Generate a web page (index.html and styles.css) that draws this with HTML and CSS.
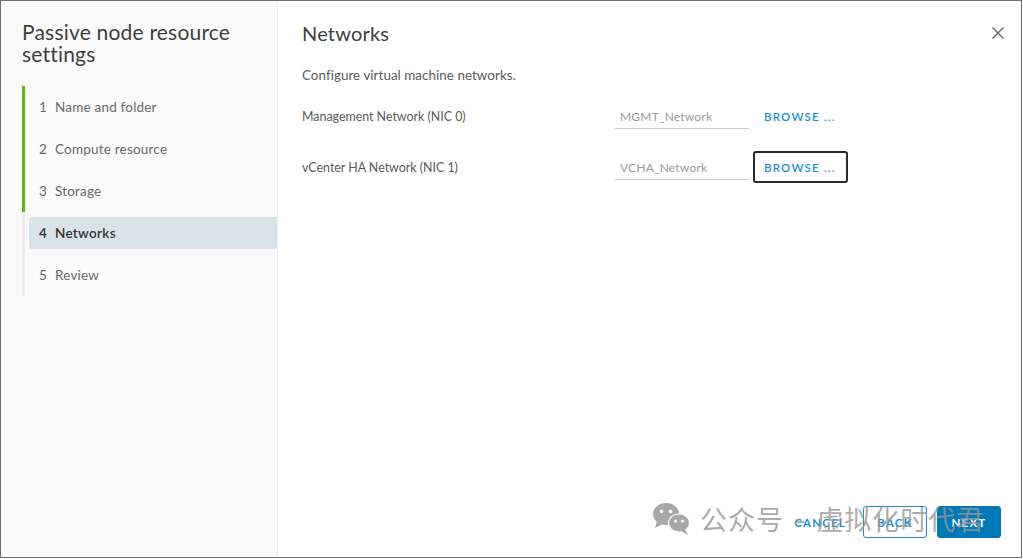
FILE: index.html
```html
<!DOCTYPE html>
<html>
<head>
<meta charset="utf-8">
<link rel="stylesheet" href="styles.css">
</head>
<body>
<div class="dialog">
  <aside class="sidebar">
    <h1 class="title">Passive node resource settings</h1>
    <ol class="steps">
      <li class="step done"><span class="step-inner"><span class="num">1</span>Name and folder</span></li>
      <li class="step done"><span class="step-inner"><span class="num">2</span>Compute resource</span></li>
      <li class="step done"><span class="step-inner"><span class="num">3</span>Storage</span></li>
      <li class="step active"><span class="step-inner"><span class="num">4</span>Networks</span></li>
      <li class="step"><span class="step-inner"><span class="num">5</span>Review</span></li>
    </ol>
  </aside>
  <main class="content">
    <header class="content-header">
      <h2 class="heading">Networks</h2>
      <button class="close" aria-label="Close">
        <svg width="14" height="14" viewBox="0 0 14 14"><path d="M1.5 1.5 L12.5 12.5 M12.5 1.5 L1.5 12.5" stroke="#6a6a6a" stroke-width="1.4" fill="none"/></svg>
      </button>
    </header>
    <p class="desc">Configure virtual machine networks.</p>
    <div class="rows">
      <div class="row">
        <span class="label">Management Network (NIC 0)</span>
        <span class="field">MGMT_Network</span>
        <button class="browse">BROWSE ...</button>
      </div>
      <div class="row">
        <span class="label">vCenter HA Network (NIC 1)</span>
        <span class="field">VCHA_Network</span>
        <button class="browse focused">BROWSE ...</button>
      </div>
    </div>
    <footer class="footer">
      <button class="btn btn-flat">CANCEL</button>
      <button class="btn btn-outline">BACK</button>
      <button class="btn btn-primary">NEXT</button>
    </footer>
  </main>
  <div class="watermark">
    <svg class="wm-icon" width="40" height="34" viewBox="0 0 40 34">
      <ellipse cx="14" cy="12" rx="13" ry="11" fill="#a8a8a8"/>
      <path d="M5 19 L3 26 L11 22 Z" fill="#a8a8a8"/>
      <circle cx="9.5" cy="9.5" r="1.8" fill="#fff"/>
      <circle cx="18.5" cy="9.5" r="1.8" fill="#fff"/>
      <ellipse cx="27" cy="21" rx="11" ry="9.5" fill="#fff"/>
      <ellipse cx="27" cy="21" rx="10" ry="8.5" fill="#a8a8a8"/>
      <path d="M33 27 L36 33 L29 29 Z" fill="#a8a8a8"/>
      <circle cx="23.5" cy="19" r="1.5" fill="#fff"/>
      <circle cx="30.5" cy="19" r="1.5" fill="#fff"/>
    </svg>
    <span class="wm-text">公众号<span class="wm-sep">-</span>虚拟化时代君</span>
  </div>
</div>
</body>
</html>
```

FILE: styles.css
```css
* { box-sizing: border-box; }
html, body { margin: 0; padding: 0; background: #fff; }
body { font-family: "Lato", "Open Sans", "Noto Sans", sans-serif; color: #565656; }

.dialog {
  position: relative;
  width: 1022px;
  height: 558px;
  border: 1px solid #707070;
  display: flex;
  background: #fff;
  overflow: hidden;
}

.sidebar {
  width: 277px;
  flex: none;
  background: #fafafa;
  border-right: 1px solid #ededed;
}

.title {
  margin: 0;
  padding: 20px 0 0 21px;
  font-size: 21px;
  font-weight: 400;
  line-height: 22px;
  color: #404040;
  letter-spacing: 0.2px;
}

.steps {
  list-style: none;
  margin: 21px 0 0 21px;
  padding: 0;
}

.step {
  border-left: 3px solid #eeeeee;
  padding: 5px 0 5px 4px;
  height: 42px;
}
.step.done { border-left-color: #62b516; }

.step-inner {
  display: flex;
  align-items: center;
  height: 32px;
  padding-left: 10px;
  font-size: 13.5px;
  letter-spacing: 0.2px;
  color: #6a6a6a;
  border-radius: 3px 0 0 3px;
}
.step .num { width: 16px; }
.step.active .step-inner {
  background: #d9e4ea;
  color: #333;
  font-weight: 600;
  letter-spacing: 0.3px;
}

.content {
  flex: 1;
  display: flex;
  flex-direction: column;
  padding: 20px 20px 19px 24px;
}

.content-header {
  display: flex;
  align-items: center;
  justify-content: space-between;
  height: 24px;
}
.heading {
  margin: 0;
  font-size: 20px;
  font-weight: 400;
  line-height: 24px;
  color: #404040;
  letter-spacing: 0.2px;
}
.close {
  border: 0;
  background: none;
  padding: 0;
  width: 14px;
  height: 14px;
  margin-right: -4px;
  display: flex;
}

.desc {
  margin: 21px 0 0;
  font-size: 13.4px;
  line-height: 18px;
  color: #5a5a5a;
  letter-spacing: 0.05px;
}

.rows {
  margin-top: 16px;
  display: flex;
  flex-direction: column;
  gap: 19px;
}
.row {
  display: flex;
  align-items: center;
  height: 32px;
}
.label {
  width: 313px;
  font-size: 12.4px;
  color: #5a5a5a;
}
.field {
  width: 134px;
  height: 24px;
  margin-top: 2px;
  padding: 2px 5px 0;
  font-size: 12px;
  line-height: 20px;
  color: #9a9a9a;
  letter-spacing: 0.2px;
  border-bottom: 1px solid #c8c8c8;
}
.browse {
  margin-left: 4px;
  width: 95px;
  height: 32px;
  padding: 0 0 0 10px;
  text-align: left;
  border: 1px solid transparent;
  border-radius: 3px;
  background: none;
  font-family: inherit;
  font-size: 11.5px;
  font-weight: 600;
  letter-spacing: 1.2px;
  color: #1f8ecf;
}
.browse.focused { border: 2px solid #2b2b2b; padding-left: 9px; }

.footer {
  margin-top: auto;
  display: flex;
  justify-content: flex-end;
  gap: 10px;
}
.btn {
  height: 32px;
  min-width: 64px;
  padding: 0 12px;
  border-radius: 3px;
  font-family: inherit;
  font-size: 11.5px;
  font-weight: 700;
  letter-spacing: 1.2px;
  border: 1px solid transparent;
  background: none;
}
.btn-flat { color: #1f8ecf; padding-right: 6px; }
.btn-outline { border-color: #1f8ecf; color: #1f8ecf; }
.btn-primary { background: #0079b8; color: #fff; border-color: #0079b8; }

.watermark {
  position: absolute;
  left: 651px;
  top: 498px;
  display: flex;
  align-items: center;
  gap: 8px;
  pointer-events: none;
}
.wm-text {
  font-family: "Noto Sans CJK SC", sans-serif;
  font-size: 27px;
  line-height: 40px;
  color: rgba(150, 150, 150, 0.8);
  letter-spacing: 1px;
}
.wm-sep { margin: 0 10px 0 12px; }
```
